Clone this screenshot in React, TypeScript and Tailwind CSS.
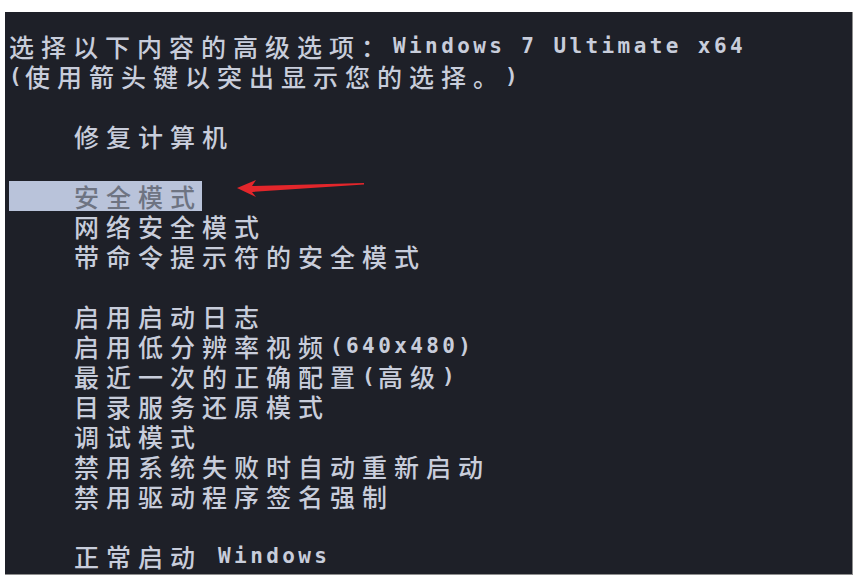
import React from 'react';

const cjkFont = '"Noto Sans CJK SC", "Noto Sans", sans-serif';
const monoFont = '"DejaVu Sans Mono", "Liberation Mono", monospace';

// Split a line into half-width (ASCII) and full-width runs so each sits on a 16px/32px grid
const BootText: React.FC<{ text: string }> = ({ text }) => {
  const parts = text.split(/([\x20-\x7e]+)/).filter(Boolean);
  return (
    <>
      {parts.map((p, i) =>
        /^[\x20-\x7e]+$/.test(p) ? (
          <span
            key={i}
            className="inline-block h-[28px] whitespace-pre font-bold text-[21px] leading-[28px] tracking-[3.4px]"
            style={{ fontFamily: monoFont }}
          >
            {p}
          </span>
        ) : (
          <span
            key={i}
            className="inline-block h-[28px] font-medium text-[25px] leading-[28px] tracking-[7px]"
            style={{ fontFamily: cjkFont }}
          >
            {p}
          </span>
        )
      )}
    </>
  );
};

type Row = { text: string; indent?: boolean; selected?: boolean };

const rows: Row[] = [
  { text: '选择以下内容的高级选项：Windows 7 Ultimate x64' },
  { text: '(使用箭头键以突出显示您的选择。)' },
  { text: '' },
  { text: '修复计算机', indent: true },
  { text: '' },
  { text: '安全模式', indent: true, selected: true },
  { text: '网络安全模式', indent: true },
  { text: '带命令提示符的安全模式', indent: true },
  { text: '' },
  { text: '启用启动日志', indent: true },
  { text: '启用低分辨率视频(640x480)', indent: true },
  { text: '最近一次的正确配置(高级)', indent: true },
  { text: '目录服务还原模式', indent: true },
  { text: '调试模式', indent: true },
  { text: '禁用系统失败时自动重新启动', indent: true },
  { text: '禁用驱动程序签名强制', indent: true },
  { text: '' },
  { text: '正常启动 Windows', indent: true },
];

const App: React.FC = () => {
  return (
    <div className="w-[854px] h-[578px] bg-white pt-[12px] pl-[5px] overflow-hidden">
      <div className="relative w-[848px] h-[563px] bg-[#1e2028] border-r border-b border-[#8e8e8e] pt-[19px] pl-[4px]">
        {rows.map((r, i) => (
          <div key={i} className="h-[30px] flex items-center">
            <div
              className={
                'h-[30px] flex items-center ' +
                (r.indent ? 'pl-[65px] ' : '') +
                (r.selected ? 'bg-[#b9c3da] text-[#6e7482]' : 'text-[#c8cddb]')
              }
            >
              {r.text ? <BootText text={r.text} /> : null}
            </div>
          </div>
        ))}

        {/* red annotation arrow */}
        <svg
          className="absolute left-[228px] top-[164px] pointer-events-none"
          width="140"
          height="30"
          viewBox="0 0 140 30"
        >
          <path
            d="M4 12 L23 4 L19 10 L131 7 L131 8.6 L19 16 L23 21 Z"
            fill="#e3262b"
          />
        </svg>
      </div>
    </div>
  );
};

export default App;
